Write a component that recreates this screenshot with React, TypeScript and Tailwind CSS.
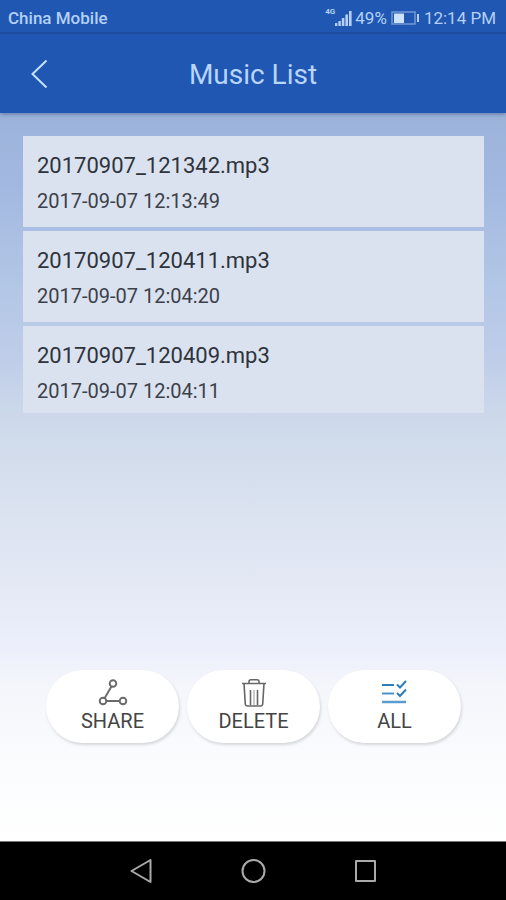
import React from 'react';

interface Track {
  name: string;
  date: string;
}

const tracks: Track[] = [
  { name: '20170907_121342.mp3', date: '2017-09-07 12:13:49' },
  { name: '20170907_120411.mp3', date: '2017-09-07 12:04:20' },
  { name: '20170907_120409.mp3', date: '2017-09-07 12:04:11' },
];

function SignalIcon() {
  return (
    <svg width="17" height="16" viewBox="0 0 17 16" fill="currentColor" aria-hidden="true">
      <rect x="0" y="13" width="2.4" height="3" />
      <rect x="3.4" y="11" width="2.4" height="5" />
      <rect x="6.8" y="8" width="2.6" height="8" />
      <rect x="10.4" y="4.5" width="2.6" height="11.5" />
      <rect x="14" y="1" width="2.6" height="15" />
    </svg>
  );
}

function BatteryIcon() {
  return (
    <svg width="29" height="14" viewBox="0 0 29 14" aria-hidden="true">
      <rect x="1" y="1" width="23" height="12" fill="none" stroke="#7099d6" strokeWidth="1.5" />
      <rect x="3" y="2.5" width="10" height="9.5" fill="#cfe2fb" />
      <rect x="26" y="3" width="2" height="8" fill="currentColor" />
    </svg>
  );
}

function StatusBar() {
  return (
    <div className="flex h-8 items-center justify-between pt-1 pr-[10px] pl-2 text-[17px] leading-7 text-[#b4d0f6]">
      <span className="font-medium">China Mobile</span>
      <div className="flex items-center">
        <span className="mb-3 text-[8px] leading-none font-bold">4G</span>
        <SignalIcon />
        <span className="ml-[3px]">49%</span>
        <span className="mr-1 ml-1">
          <BatteryIcon />
        </span>
        <span>12:14 PM</span>
      </div>
    </div>
  );
}

function Header() {
  return (
    <header className="z-10 bg-[#2057b2] shadow-[0_1px_4px_rgba(40,60,110,0.5)]">
      <StatusBar />
      <div className="grid h-[81px] grid-cols-[80px_1fr_80px] items-center border-t-2 border-[#1c4c9e] text-[#b9d5fb]">
        <button type="button" aria-label="Back" className="flex h-full items-center pl-[30px]">
          <svg width="18" height="30" viewBox="0 0 18 30" fill="none" stroke="#c6e2fb" strokeWidth="2" aria-hidden="true">
            <path d="M16.5 1.5 L2.5 15 L16.5 28.5" />
          </svg>
        </button>
        <h1 className="pt-[2px] text-center text-[28px] leading-8">Music List</h1>
      </div>
    </header>
  );
}

function ShareIcon() {
  return (
    <svg width="30" height="28" viewBox="0 0 30 28" fill="none" stroke="#6a6a6a" strokeWidth="1.9" aria-hidden="true">
      <circle cx="15" cy="4.5" r="3.3" />
      <circle cx="5" cy="22" r="3.3" />
      <circle cx="25" cy="22" r="3.3" />
      <path d="M13.4 7.5 L6.7 19 M8.5 22 H21.5" />
    </svg>
  );
}

function TrashIcon() {
  return (
    <svg width="26" height="28" viewBox="0 0 26 28" fill="none" stroke="#666" strokeWidth="1.6" aria-hidden="true">
      <path d="M1 4.5 H25 M8 4.5 V2.5 Q8 0.8 10 0.8 H16 Q18 0.8 18 2.5 V4.5" />
      <path d="M3 4.5 L4.3 25 Q4.5 27 6.5 27 H19.5 Q21.5 27 21.7 25 L23 4.5" />
      <path d="M9.5 11 V26 M16.5 11 V26" />
      <path d="M13 11 V26" stroke="#999" strokeWidth="1" />
    </svg>
  );
}

function CheckListIcon() {
  return (
    <svg width="26" height="28" viewBox="0 0 26 28" fill="none" stroke="#2b7dbd" strokeWidth="2" aria-hidden="true">
      <path d="M0 6 H12 M15 5.5 L18 8.5 L24 2" />
      <path d="M15 14 L18 17 L24 10.5" />
      <path d="M0 14.5 H12" stroke="#4d92cb" />
      <path d="M0 23 H24" stroke="#5b9bd0" strokeWidth="2.5" />
    </svg>
  );
}

const actions: Array<{ label: string; icon: React.ReactNode }> = [
  { label: 'SHARE', icon: <ShareIcon /> },
  { label: 'DELETE', icon: <TrashIcon /> },
  { label: 'ALL', icon: <CheckListIcon /> },
];

function NavBar() {
  return (
    <nav className="grid h-[59px] grid-cols-[1fr_112px_112px_112px_1fr] border-t border-[#777] bg-black text-[#aaa]">
      <button type="button" aria-label="Back" className="col-start-2 flex items-center justify-center">
        <svg width="24" height="24" viewBox="0 0 24 24" fill="none" stroke="currentColor" strokeWidth="2" strokeLinejoin="round" aria-hidden="true">
          <path d="M21.5 1 V23 L2.5 12 Z" />
        </svg>
      </button>
      <button type="button" aria-label="Home" className="flex items-center justify-center">
        <svg width="26" height="26" viewBox="0 0 26 26" fill="none" stroke="currentColor" strokeWidth="2" aria-hidden="true">
          <circle cx="13.5" cy="13" r="11" />
        </svg>
      </button>
      <button type="button" aria-label="Recent apps" className="flex items-center justify-center">
        <svg width="24" height="24" viewBox="0 0 24 24" fill="none" stroke="currentColor" strokeWidth="2" strokeLinejoin="round" aria-hidden="true">
          <rect x="3" y="2" width="19" height="20" />
        </svg>
      </button>
    </nav>
  );
}

export default function App() {
  return (
    <div className="flex min-h-screen flex-col font-['Roboto',sans-serif]">
      <Header />
      <main className="flex flex-1 flex-col bg-[linear-gradient(to_bottom,#9bb3da_0%,#a3b8e0_10%,#b0c5e5_22%,#bfcde9_34%,#cdd9ea_42%,#dae2f0_54%,#e4e8f5_64%,#ebeefb_73%,#f5f6fb_79%,#fbfcfe_90%,#ffffff_100%)]">
        <ul className="mt-[23px] mr-[22px] ml-[23px] flex flex-col gap-1">
          {tracks.map((track) => (
            <li key={track.name} className="h-[91px] bg-[#dae2f0] px-[14px] pt-4 last:h-[87px]">
              <p className="text-[22px] leading-7 text-[#2f333b]">{track.name}</p>
              <p className="mt-[7px] text-[20px] leading-7 text-[#3c4048]">{track.date}</p>
            </li>
          ))}
        </ul>
        <div className="mx-auto mt-auto mb-[98px] flex gap-2 pl-[1px]">
          {actions.map(({ label, icon }) => (
            <button
              key={label}
              type="button"
              className="flex h-[73px] w-[133px] flex-col items-center rounded-full bg-white pt-[9px] text-[20px] leading-7 text-[#444] shadow-[1px_2px_3px_rgba(0,0,0,0.14)]"
            >
              {icon}
              {label}
            </button>
          ))}
        </div>
      </main>
      <NavBar />
    </div>
  );
}
